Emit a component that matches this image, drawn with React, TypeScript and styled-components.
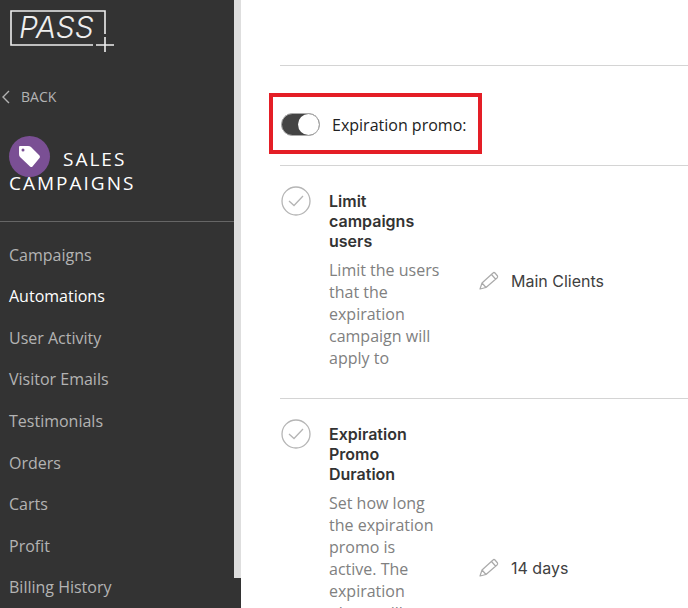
import React from "react";
import styled, { createGlobalStyle } from "styled-components";

const Global = createGlobalStyle`
  * { box-sizing: border-box; }
  body { margin: 0; background: #fff; font-family: "Open Sans", "Noto Sans", sans-serif; font-size: 16px; }
  h1, h2, p { margin: 0; }
  a { color: inherit; text-decoration: none; }
  button, input { font: inherit; }
`;

const Page = styled.div`
  display: flex;
  height: 100vh;
  overflow: hidden;
`;

const Sidebar = styled.aside`
  flex: 0 0 241px;
  display: flex;
  background: #333;
  color: #b3b3b3;
`;

const SidebarBody = styled.div`
  flex: 1;
`;

const ScrollThumb = styled.div`
  width: 7px;
  height: calc(100vh - 30px);
  background: #dedede;
`;

const Logo = styled.a`
  display: block;
  padding: 9px 0 0 9px;
  height: 54px;
  svg { display: block; }
`;

const BackLink = styled.a`
  display: flex;
  align-items: center;
  gap: 11px;
  margin-top: 33px;
  padding-left: 2px;
  font-size: 14px;
  line-height: 20px;
`;

const Section = styled.div`
  margin-top: 29px;
  padding: 0 9px 26px;
  border-bottom: 1px solid #666;
`;

const SectionTitle = styled.h1`
  color: #fff;
  font-size: 19px;
  line-height: 24px;
  font-weight: 400;
  letter-spacing: 2px;
  text-transform: uppercase;
`;

const Badge = styled.span`
  display: inline-flex;
  align-items: center;
  justify-content: center;
  width: 41px;
  height: 41px;
  margin-right: 13px;
  margin-bottom: -6px;
  border-radius: 50%;
  background: #7a4f94;
  vertical-align: bottom;
`;

const Nav = styled.nav`
  display: grid;
  grid-auto-rows: 1fr;
  min-height: 374px;
  margin-top: 12px;
`;

const NavLink = styled.a<{ $active?: boolean }>`
  display: flex;
  align-items: center;
  padding-left: 9px;
  font-weight: ${(p) => (p.$active ? 500 : 400)};
  color: ${(p) => (p.$active ? "#fff" : "#b3b3b3")};
`;

const Main = styled.main`
  flex: 1;
  padding: 65px 0 0 39px;
`;

const ToggleBar = styled.section`
  display: flex;
  align-items: center;
  height: 100px;
  padding-top: 16px;
  border-top: 1px solid #d4d4d4;
`;

const Highlight = styled.div`
  display: flex;
  align-items: center;
  height: 61px;
  margin-left: -11px;
  padding: 2px 12px 0 8px;
  border: 4px solid #e41e26;
`;

const ToggleLabel = styled.label`
  display: flex;
  align-items: center;
  gap: 12px;
  color: #222;
`;

const Switch = styled.input`
  appearance: none;
  display: flex;
  justify-content: flex-end;
  width: 39px;
  height: 23px;
  margin: 0;
  border: 1px solid #aaa;
  border-radius: 12px;
  background: #444;
  &::before {
    content: "";
    width: 21px;
    height: 21px;
    border-radius: 50%;
    background: #fff;
  }
`;

const Setting = styled.section<{ $tall?: boolean }>`
  display: grid;
  grid-template-columns: 48px 116px 1fr;
  min-height: ${(p) => (p.$tall ? 340 : 233)}px;
  padding: 20px 0 22px 1px;
  border-top: 1px solid #d4d4d4;
`;

const Copy = styled.div`
  padding-top: 5px;
`;

const SettingTitle = styled.h2`
  font-family: Inter, "Open Sans", sans-serif;
  font-size: 16px;
  line-height: 20px;
  font-weight: 600;
  color: #333;
`;

const Description = styled.p`
  margin-top: 8px;
  line-height: 22px;
  color: #808080;
`;

const EditButton = styled.button`
  align-self: center;
  justify-self: start;
  display: flex;
  align-items: center;
  gap: 12px;
  margin-left: 34px;
  padding: 0;
  border: 0;
  background: none;
  color: #404040;
  font-family: Inter, "Open Sans", sans-serif;
`;

function PassLogo() {
  return (
    <svg width="106" height="44" viewBox="0 0 106 44" fill="none" stroke="#eee" strokeWidth="1.6">
      <path d="M84 36H2V2H96V25M96 28V43M87 36H105" />
      <text x="10" y="29" fill="#eee" stroke="none" fontFamily="Inter" fontStyle="italic" fontWeight="300" fontSize="30">PASS</text>
    </svg>
  );
}

function TagIcon() {
  return (
    <svg width="23" height="23" viewBox="0 0 23 23">
      <path fill="#fff" fillRule="evenodd" d="M2 1H10Q12 1 13 2L21.500 10.500Q22.500 12 21.500 13L14.500 21.500Q13.500 22.500 12 21.500L2 12Q1 11 1 9V2Q1 1 2 1ZM5 3.500A1.500 1.500 0 1 0 5 6.500A1.500 1.500 0 1 0 5 3.500Z" />
    </svg>
  );
}

function CheckIcon() {
  return (
    <svg width="30" height="30" viewBox="0 0 30 30" fill="none" stroke="#b5b5b5" strokeWidth="1.3">
      <circle cx="15" cy="15" r="14" />
      <path d="M8 15L13 19.500L22 10" />
    </svg>
  );
}

function PencilIcon() {
  return (
    <svg width="20" height="20" viewBox="0 0 20 20" fill="none" stroke="#aaa" strokeWidth="1.2" strokeLinejoin="round">
      <path d="M1 18L3 12L14 2Q15 1 16 2L18.500 5Q19 6 18 7L7 16.500ZM3 12L7 16.500M12.500 3.500L16.500 8" />
    </svg>
  );
}

const links = ["Campaigns", "Automations", "User Activity", "Visitor Emails", "Testimonials", "Orders", "Carts", "Profit", "Billing History"];

const settings = [
  { title: "Limit campaigns users", text: "Limit the users that the expiration campaign will apply to", value: "Main Clients" },
  { title: "Expiration Promo Duration", text: "Set how long the expiration promo is active. The expiration phase will", value: "14 days", tall: true },
];

export default function App() {
  return (
    <>
      <Global />
      <Page>
        <Sidebar>
          <SidebarBody>
            <Logo href="#" aria-label="Pass"><PassLogo /></Logo>
            <BackLink href="#">
              <svg width="8" height="14" viewBox="0 0 8 14" fill="none" stroke="#b3b3b3" strokeWidth="1.4"><path d="M7 1L1 7L7 13" /></svg>
              BACK
            </BackLink>
            <Section>
              <SectionTitle><Badge><TagIcon /></Badge>Sales Campaigns</SectionTitle>
            </Section>
            <Nav>
              {links.map((name) => (
                <NavLink key={name} href="#" $active={name === "Automations"}>{name}</NavLink>
              ))}
            </Nav>
          </SidebarBody>
          <ScrollThumb />
        </Sidebar>
        <Main>
          <ToggleBar>
            <Highlight>
              <ToggleLabel>
                <Switch type="checkbox" role="switch" defaultChecked />
                Expiration promo:
              </ToggleLabel>
            </Highlight>
          </ToggleBar>
          {settings.map((s) => (
            <Setting key={s.title} $tall={s.tall}>
              <CheckIcon />
              <Copy>
                <SettingTitle>{s.title}</SettingTitle>
                <Description>{s.text}</Description>
              </Copy>
              <EditButton><PencilIcon />{s.value}</EditButton>
            </Setting>
          ))}
        </Main>
      </Page>
    </>
  );
}
